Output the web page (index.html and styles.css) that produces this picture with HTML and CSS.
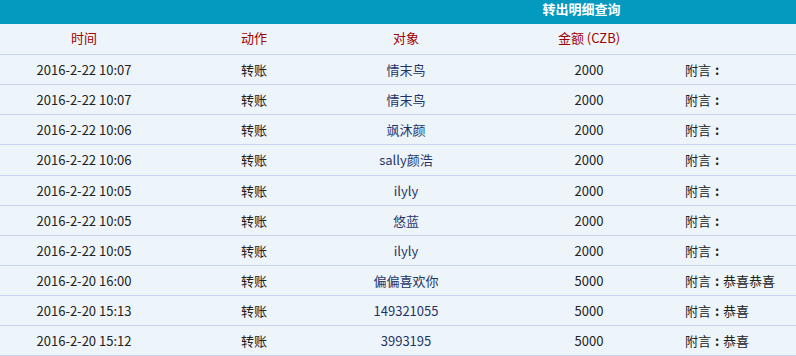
FILE: index.html
```html
<!DOCTYPE html>
<html lang="zh-CN">
<head>
<meta charset="utf-8">
<title>转出明细查询</title>
<link rel="stylesheet" href="styles.css">
</head>
<body>
<div class="viewport">
<table class="detail">
  <colgroup>
    <col class="c-time"><col class="c-act"><col class="c-obj"><col class="c-amt"><col class="c-note">
  </colgroup>
  <thead>
    <tr class="title-row"><th colspan="5">转出明细查询</th></tr>
    <tr class="head-row">
      <th>时间</th><th>动作</th><th>对象</th><th class="amt">金额 (CZB)</th><th></th>
    </tr>
  </thead>
  <tbody>
    <tr><td>2016-2-22 10:07</td><td>转账</td><td class="obj">情末鸟</td><td class="amt">2000</td><td class="note">附言<span class="colon">:</span></td></tr>
    <tr><td>2016-2-22 10:07</td><td>转账</td><td class="obj">情末鸟</td><td class="amt">2000</td><td class="note">附言<span class="colon">:</span></td></tr>
    <tr><td>2016-2-22 10:06</td><td>转账</td><td class="obj">飒沐颜</td><td class="amt">2000</td><td class="note">附言<span class="colon">:</span></td></tr>
    <tr><td>2016-2-22 10:06</td><td>转账</td><td class="obj">sally颜浩</td><td class="amt">2000</td><td class="note">附言<span class="colon">:</span></td></tr>
    <tr><td>2016-2-22 10:05</td><td>转账</td><td class="obj">ilyly</td><td class="amt">2000</td><td class="note">附言<span class="colon">:</span></td></tr>
    <tr><td>2016-2-22 10:05</td><td>转账</td><td class="obj">悠蓝</td><td class="amt">2000</td><td class="note">附言<span class="colon">:</span></td></tr>
    <tr><td>2016-2-22 10:05</td><td>转账</td><td class="obj">ilyly</td><td class="amt">2000</td><td class="note">附言<span class="colon">:</span></td></tr>
    <tr><td>2016-2-20 16:00</td><td>转账</td><td class="obj">偏偏喜欢你</td><td class="amt">5000</td><td class="note">附言<span class="colon">:</span>恭喜恭喜</td></tr>
    <tr><td>2016-2-20 15:13</td><td>转账</td><td class="obj">149321055</td><td class="amt">5000</td><td class="note">附言<span class="colon">:</span>恭喜</td></tr>
    <tr><td>2016-2-20 15:12</td><td>转账</td><td class="obj">3993195</td><td class="amt">5000</td><td class="note">附言<span class="colon">:</span>恭喜</td></tr>
  </tbody>
</table>
</div>
</body>
</html>
```
FILE: styles.css
```css
html, body {
  margin: 0;
  padding: 0;
  background: #eef5fa;
}
.viewport {
  width: 796px;
  height: 356px;
  overflow: hidden;
}
.detail {
  width: 1163px;
  table-layout: fixed;
  border-collapse: collapse;
  font-family: "Noto Sans CJK SC", "Noto Sans", sans-serif;
  font-size: 13px;
  color: #222;
  background: #eef5fa;
}
.c-time { width: 168px; }
.c-act { width: 172px; }
.c-obj { width: 132px; }
.c-amt { width: 213px; }
.c-note { width: 478px; }
.title-row th {
  background: #049abf;
  color: #fff;
  font-weight: bold;
  height: 24px;
  padding: 0;
  line-height: 17px;
  vertical-align: top;
  text-align: center;
}
.head-row th {
  height: 27px;
  padding: 0 0 3px 0;
  font-weight: normal;
  color: #a00000;
  text-align: center;
  border-bottom: 1px solid #c9d5ef;
}
td {
  height: 29.15px;
  padding: 0;
  text-align: center;
  border-bottom: 1px solid #c9d5ef;
}
.head-row th.amt,
td.amt { padding-left: 21px; }
td.obj { color: #1f3468; }
td.note { text-align: left; }
.colon {
  display: inline-block;
  width: 12px;
  text-align: center;
  font-weight: bold;
}
```
